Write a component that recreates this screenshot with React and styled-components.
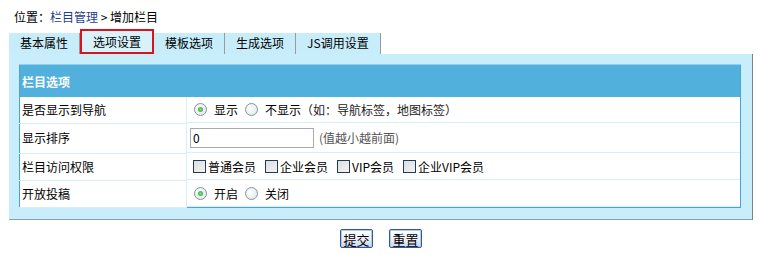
import React, { useState } from 'react';
import styled, { createGlobalStyle } from 'styled-components';

const GlobalStyle = createGlobalStyle`
  body {
    margin: 0;
    background: #fff;
    font-family: "Noto Sans CJK SC", "Liberation Sans", sans-serif;
    font-size: 12px;
    color: #000;
  }
`;

const Page = styled.div`
  width: 763px;
  padding: 0 10px 0 9px;
  box-sizing: border-box;
`;

const Crumb = styled.div`
  height: 29px;
  line-height: 34px;
  padding-left: 5px;
  a {
    color: #1d3f8f;
    text-decoration: none;
  }
`;

const Tabs = styled.div`
  display: flex;
  align-items: flex-end;
  height: 25px;
`;

const Tab = styled.div`
  box-sizing: border-box;
  height: ${(p) => (p.$active ? '25px' : '21px')};
  line-height: ${(p) => (p.$active ? '21px' : '20px')};
  padding: 0 ${(p) => (p.$active ? '11px' : '11px')};
  background: ${(p) => (p.$active ? '#d8f2fc' : '#c8edfa')};
  border: ${(p) => (p.$active ? '2px solid #d9121b' : 'none')};
  border-right: ${(p) => (p.$active ? '2px solid #d9121b' : '1px solid #9a9a9a')};
  cursor: pointer;
  white-space: nowrap;
`;

const Panel = styled.div`
  background: #c8eefb;
  border-right: 1px solid #7f7f7f;
  border-bottom: 1px solid #8aa0ab;
  padding: 10px 11px 11px 10px;
`;

const Table = styled.table`
  width: 100%;
  border-collapse: collapse;
  border: 1px solid #4aa3d6;
  background: #fff;
`;

const HeadCell = styled.th`
  height: 32px;
  padding: 0 0 0 2px;
  background: #51b1dc;
  color: #fff;
  font-weight: bold;
  text-align: left;
  border-top: 1px solid #8fd0ee;
`;

const Row = styled.tr`
  height: ${(p) => p.$h}px;
  td {
    border-bottom: 1px solid #d9eff8;
    vertical-align: middle;
  }
`;

const Label = styled.td`
  width: 164px;
  padding: 0 0 1px 2px;
  border-right: 1px solid #d9eff8;
`;

const Field = styled.td`
  padding: 0 0 0 ${(p) => p.$pad ?? 7}px;
  display: flex;
  align-items: center;
  height: inherit;
  box-sizing: border-box;
`;

const Opt = styled.label`
  display: inline-flex;
  align-items: center;
  margin-right: ${(p) => p.$gap ?? 7}px;
  cursor: pointer;
`;

const RadioDot = styled.span`
  box-sizing: border-box;
  width: 13px;
  height: 13px;
  border-radius: 50%;
  border: 1px solid #8395a5;
  background: radial-gradient(circle at 40% 40%, #ffffff 0%, #e7ebee 70%, #cfd6dc 100%);
  margin-right: 7px;
  display: inline-flex;
  align-items: center;
  justify-content: center;
  &::after {
    content: '';
    width: 5px;
    height: 5px;
    border-radius: 50%;
    background: ${(p) => (p.$on ? 'radial-gradient(circle, #7ee07e 0%, #2a9a2a 100%)' : 'transparent')};
  }
`;

const Box = styled.span`
  box-sizing: border-box;
  width: 13px;
  height: 13px;
  border: 1px solid #1f3c5e;
  background: linear-gradient(135deg, #dcdcdc 0%, #f4f4f4 100%);
  margin-right: 2px;
`;

const Note = styled.span`
  color: #222;
`;

const Input = styled.input`
  box-sizing: border-box;
  width: 124px;
  height: 20px;
  border: 1px solid #a5acb2;
  padding: 0 2px;
  font: inherit;
  margin-right: 5px;
  outline: none;
`;

const Hint = styled.span`
  color: #555;
`;

const Actions = styled.div`
  display: flex;
  justify-content: center;
  gap: 16px;
  padding-top: 9px;
`;

const Btn = styled.button`
  box-sizing: border-box;
  height: 19px;
  width: 33px;
  padding: 0;
  font: inherit;
  font-size: 13px;
  color: #000;
  border: 1px solid #2d5a9c;
  border-radius: 2px;
  background: linear-gradient(#ffffff 0%, #e9eef5 60%, #c7d4e6 100%);
  box-shadow: inset 0 0 0 1px #b8cbe6;
  cursor: pointer;
`;

const Radio = ({ on, children, gap, onClick }) => (
  <Opt $gap={gap} onClick={onClick}>
    <RadioDot $on={on} />
    {children}
  </Opt>
);

const Check = ({ children }) => (
  <Opt $gap={9}>
    <Box />
    {children}
  </Opt>
);

const tabs = ['基本属性', '选项设置', '模板选项', '生成选项', 'JS调用设置'];

export default function App() {
  const [nav, setNav] = useState(true);
  const [post, setPost] = useState(true);
  const [order, setOrder] = useState('0');

  return (
    <Page>
      <GlobalStyle />
      <Crumb>
        位置：<a href="#">栏目管理</a> &gt; 增加栏目
      </Crumb>
      <Tabs>
        {tabs.map((t, i) => (
          <Tab key={t} $active={i === 1}>{t}</Tab>
        ))}
      </Tabs>
      <Panel>
        <Table>
          <thead>
            <tr>
              <HeadCell colSpan={2}>栏目选项</HeadCell>
            </tr>
          </thead>
          <tbody>
            <Row $h={26}>
              <Label>是否显示到导航</Label>
              <Field>
                <Radio on={nav} gap={7} onClick={() => setNav(true)}>显示</Radio>
                <Radio on={!nav} gap={0} onClick={() => setNav(false)}>不显示</Radio>
                <Note>（如：导航标签，地图标签）</Note>
              </Field>
            </Row>
            <Row $h={30}>
              <Label>显示排序</Label>
              <Field $pad={3}>
                <Input value={order} onChange={(e) => setOrder(e.target.value)} />
                <Hint>(值越小越前面)</Hint>
              </Field>
            </Row>
            <Row $h={27}>
              <Label>栏目访问权限</Label>
              <Field $pad={6}>
                <Check>普通会员</Check>
                <Check>企业会员</Check>
                <Check>VIP会员</Check>
                <Check>企业VIP会员</Check>
              </Field>
            </Row>
            <Row $h={27}>
              <Label>开放投稿</Label>
              <Field>
                <Radio on={post} gap={7} onClick={() => setPost(true)}>开启</Radio>
                <Radio on={!post} onClick={() => setPost(false)}>关闭</Radio>
              </Field>
            </Row>
          </tbody>
        </Table>
      </Panel>
      <Actions>
        <Btn type="button">提交</Btn>
        <Btn type="button">重置</Btn>
      </Actions>
    </Page>
  );
}
